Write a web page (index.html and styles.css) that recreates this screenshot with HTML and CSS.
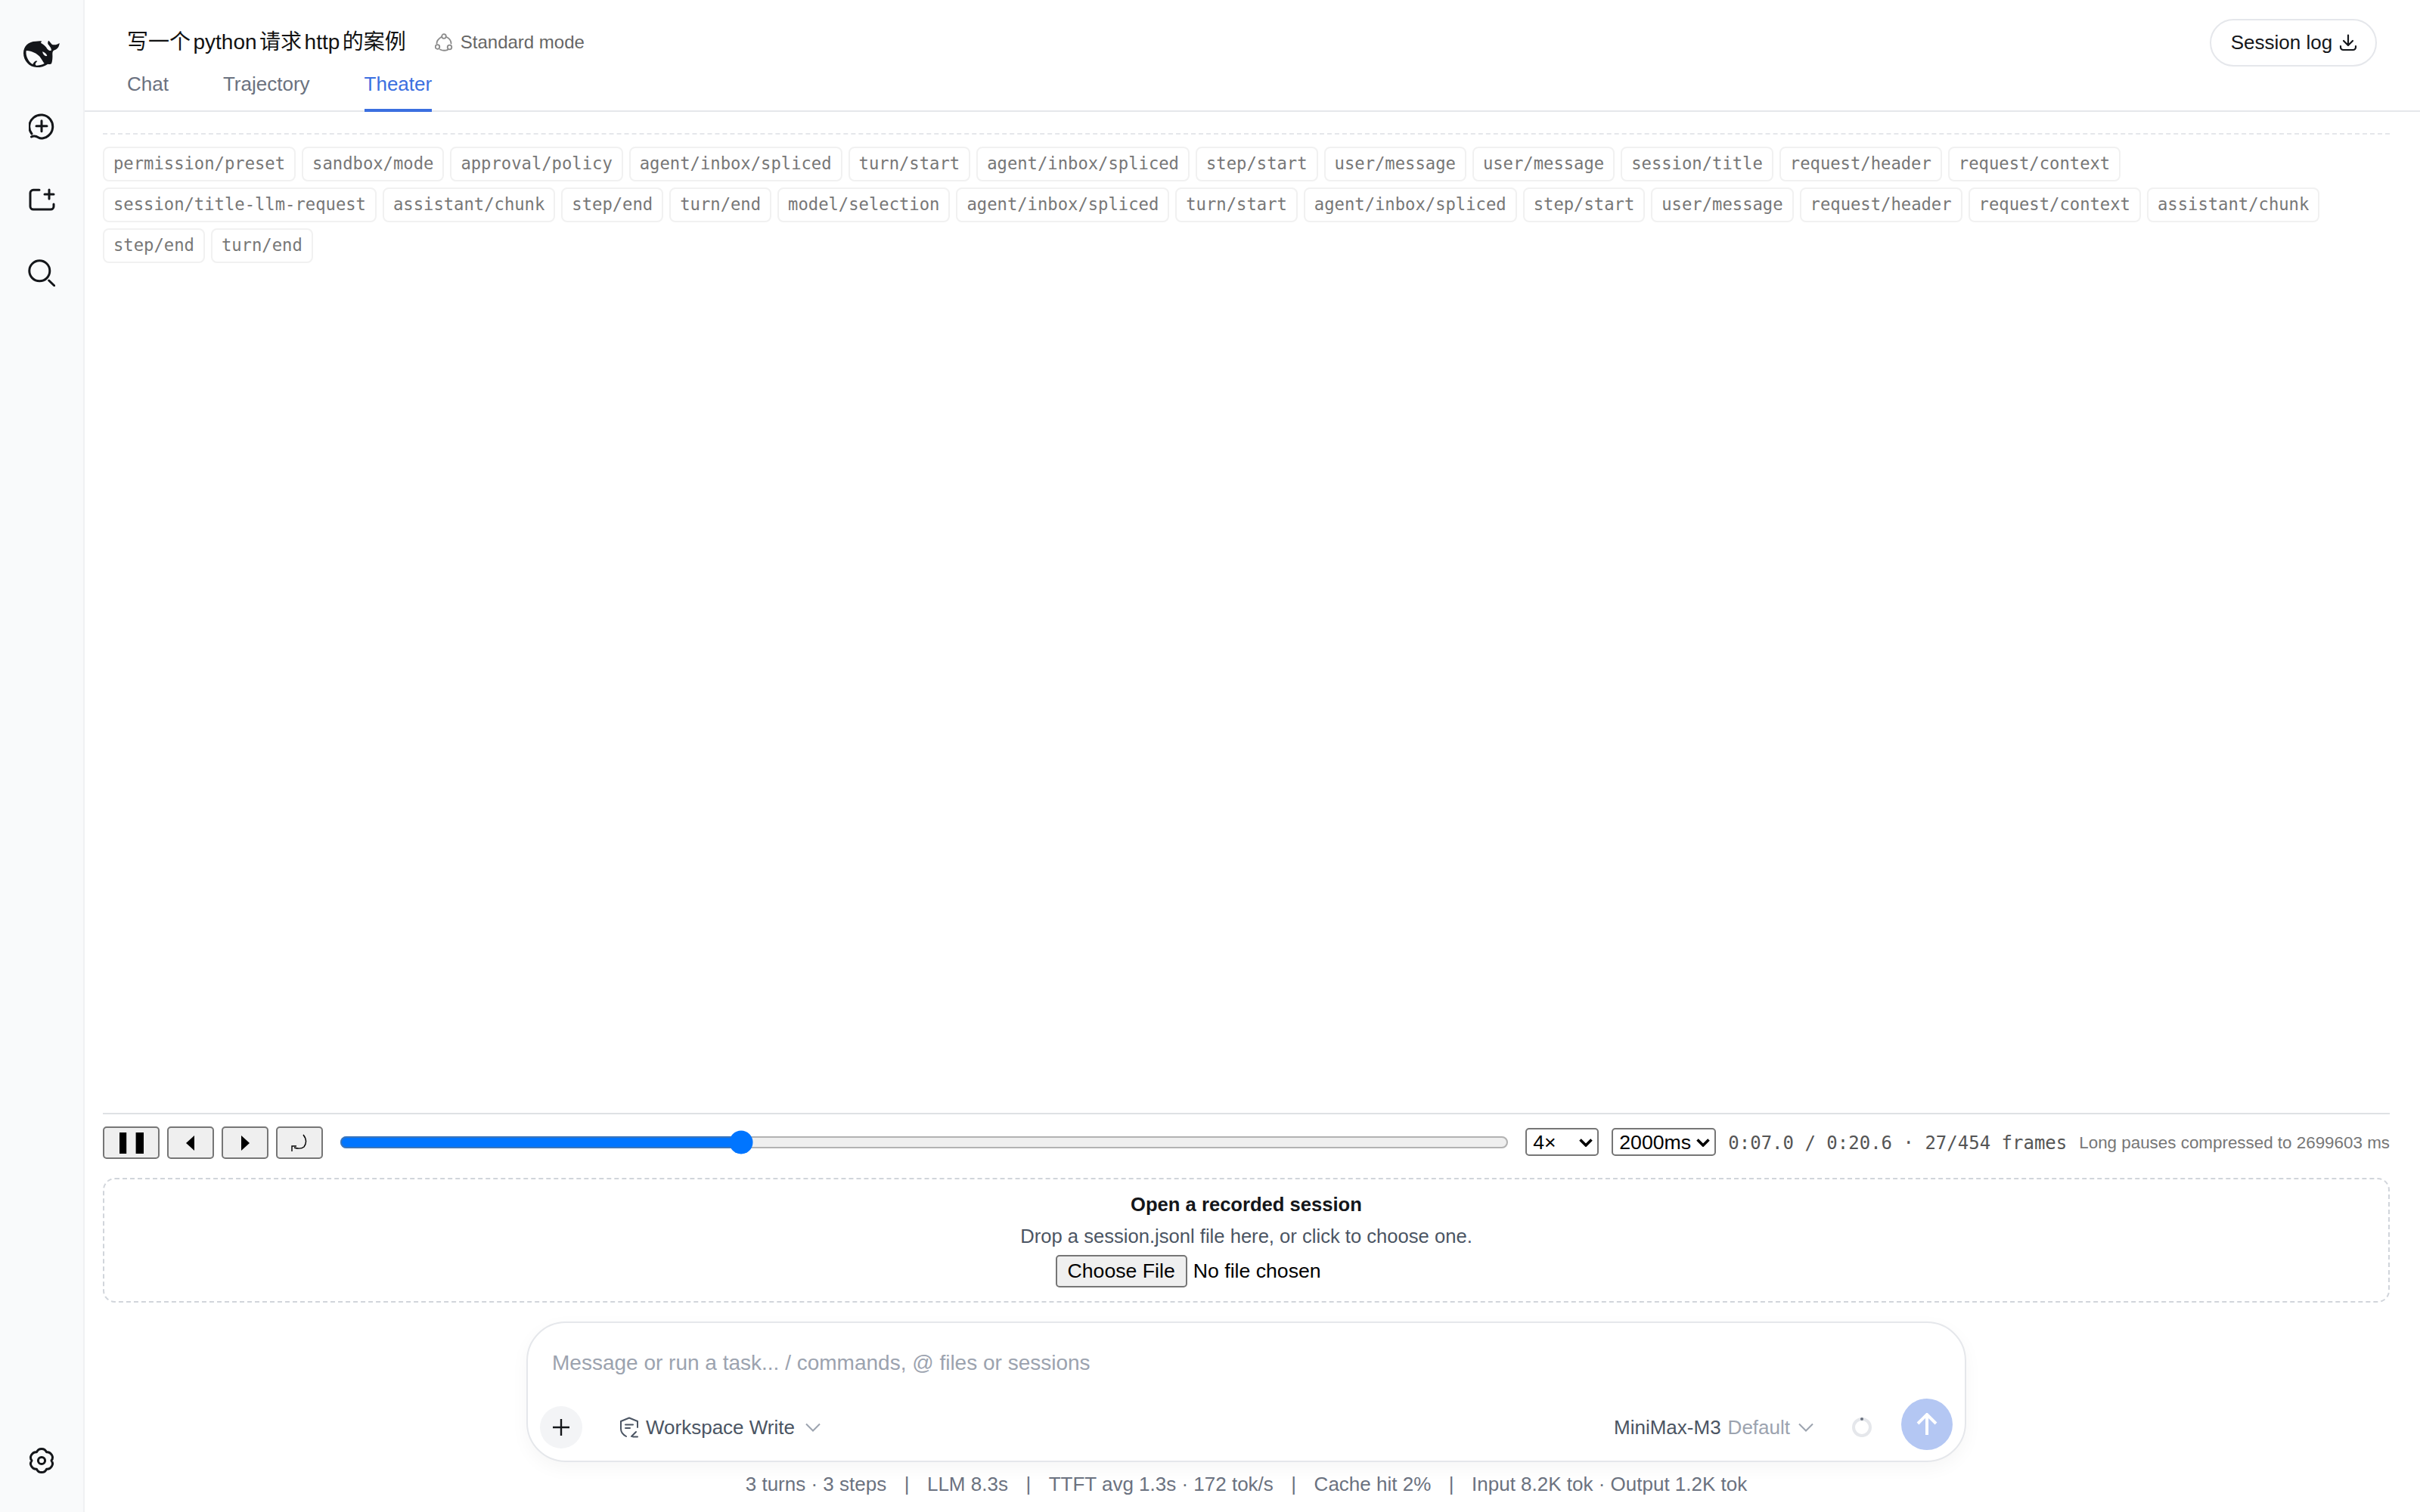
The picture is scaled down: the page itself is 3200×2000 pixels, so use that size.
FILE: index.html
```html
<!DOCTYPE html>
<html lang="en">
<head>
<meta charset="utf-8">
<title>Theater</title>
<link rel="stylesheet" href="styles.css">
</head>
<body>
<div class="app">
  <aside class="sidebar">
    <button class="side-btn logo" aria-label="Home">
      <svg width="48" height="36" viewBox="97 100 144 108"><path fill="#14161a" d="M97 152C97 124 118 105 145 105C153 105 162 103 170 105C166 108 165 110 168 113C178 118 186 126 192 136C197 141 203 144 207 141C210 134 200 124 194 115C193 110 194 105 197 102C201 106 205 111 211 118C219 120 230 120 240 112C239 126 232 136 220 140C214 142 212 147 212 155C213 168 212 184 208 194C204 197 198 196 194 195C180 205 165 208 150 208C120 208 97 182 97 152Z"/><path fill="#f9fafb" d="M108 142C124 140 150 152 162 166C168 174 174 186 180 193C170 199 158 201 148 201C140 196 146 190 152 184C146 180 140 184 134 196C120 190 104 165 108 142Z"/><path fill="#f9fafb" d="M172 146C180 148 188 154 191 162C186 166 176 162 172 146Z"/></svg>
    </button>
    <button class="side-btn" aria-label="New chat">
      <svg width="34" height="36" viewBox="0 0 34 36" fill="none" stroke="#14161a" stroke-width="3" stroke-linecap="round"><path d="M4 27A15.5 15.5 0 1 1 26 29.5C22 33 16 34 13 32C10 30 7 29 3.5 31"/><path d="M17 9.700v14M10 16.700h14"/></svg>
    </button>
    <button class="side-btn" aria-label="New folder">
      <svg width="36" height="30" viewBox="0 0 36 30" fill="none" stroke="#14161a" stroke-width="3" stroke-linecap="round"><path d="M15 2.300H7a4 4 0 0 0-4 4V24a4 4 0 0 0 4 4h23a4 4 0 0 0 4-4v-3"/><path d="M28 2v12M22 8h12"/></svg>
    </button>
    <button class="side-btn" aria-label="Search">
      <svg width="36" height="36" viewBox="0 0 36 36" fill="none" stroke="#14161a" stroke-width="3" stroke-linecap="round"><circle cx="15.300" cy="15.300" r="13.500"/><path d="M27.700 28L35 35"/></svg>
    </button>
    <button class="side-btn settings" aria-label="Settings">
      <svg width="36" height="36" viewBox="0 0 36 36" fill="none" stroke="#14161a" stroke-width="3" stroke-linejoin="round"><path d="M11.500 6.700C14 1 22 1 24.500 6.700C30 6 35 13 31 18C35 23 30 30 24.500 29.300C22 35 14 35 11.500 29.300C6 30 1 23 5 18C1 13 6 6 11.500 6.700Z"/><circle cx="18" cy="18" r="4.600"/></svg>
    </button>
  </aside>

  <main class="main">
    <header class="header">
      <div class="header-top">
        <div class="title-group">
          <h1 class="title">写一个python请求http的案例</h1>
          <span class="mode">
            <svg width="24" height="24" viewBox="0 0 24 24" fill="none" stroke="#8a8a8a" stroke-width="1.800" stroke-linecap="round"><circle cx="12" cy="4" r="2.800"/><circle cx="3.500" cy="18" r="2.800"/><circle cx="19.500" cy="18.500" r="2.800"/><path d="M8.500 5C4.500 7.500 2.500 10.500 2.500 13.500M15.500 5C19.500 7 21.500 10 21.500 13.500M7 21.500C10 23 14 23 17 21.800"/></svg>
            Standard mode
          </span>
        </div>
        <button class="log-btn">Session log
          <svg width="24" height="24" viewBox="0 0 24 24" fill="none" stroke="#14161a" stroke-width="2.200" stroke-linecap="round" stroke-linejoin="round"><path d="M12 2.500v13M6 10l6 6 6-6M2 17v1.500a3.500 3.500 0 0 0 3.500 3.500h13a3.500 3.500 0 0 0 3.500-3.500V17"/></svg>
        </button>
      </div>
      <nav class="tabs">
        <a class="tab">Chat</a>
        <a class="tab">Trajectory</a>
        <a class="tab active">Theater</a>
      </nav>
    </header>

    <section class="content">
      <div class="events">
        <span class="tag">permission/preset</span><span class="tag">sandbox/mode</span><span class="tag">approval/policy</span><span class="tag">agent/inbox/spliced</span><span class="tag">turn/start</span><span class="tag">agent/inbox/spliced</span><span class="tag">step/start</span><span class="tag">user/message</span><span class="tag">user/message</span><span class="tag">session/title</span><span class="tag">request/header</span><span class="tag">request/context</span><span class="tag">session/title-llm-request</span><span class="tag">assistant/chunk</span><span class="tag">step/end</span><span class="tag">turn/end</span><span class="tag">model/selection</span><span class="tag">agent/inbox/spliced</span><span class="tag">turn/start</span><span class="tag">agent/inbox/spliced</span><span class="tag">step/start</span><span class="tag">user/message</span><span class="tag">request/header</span><span class="tag">request/context</span><span class="tag">assistant/chunk</span><span class="tag">step/end</span><span class="tag">turn/end</span>
      </div>

      <div class="player">
        <div class="transport">
          <button class="ctl ctl-wide" aria-label="Pause"><svg width="16" height="14" viewBox="0 0 16 14"><path d="M0 0h4.600v14H0zM10.800 0H16v14h-5.200z"/></svg></button>
          <button class="ctl" aria-label="Previous"><svg width="7" height="10" viewBox="0 0 7 10"><path d="M6 0v10L.5 5z"/></svg></button>
          <button class="ctl" aria-label="Next"><svg width="7" height="10" viewBox="0 0 7 10"><path d="M1 0v10l5.500-5z"/></svg></button>
          <button class="ctl" aria-label="Restart"><svg width="12" height="12" viewBox="0 0 12 12" fill="none" stroke="#000" stroke-width=".7"><path d="M8.500.5C10.500 3 10.800 6 9 8.500C7.500 9.800 5 9.800 2.500 9"/><path d="M1 11.500V8h3"/></svg></button>
        </div>
        <input class="seek" type="range" min="0" max="20.6" step="0.1" value="7" aria-label="Seek">
        <span class="pick-wrap pick-speed">
          <select class="pick" aria-label="Speed"><option>4×</option></select>
          <svg class="pick-arrow" width="18" height="11" viewBox="0 0 18 11" fill="none" stroke="#000" stroke-width="3.600"><path d="M1.500 1.500L9 9l7.500-7.500"/></svg>
        </span>
        <span class="pick-wrap pick-gap">
          <select class="pick" aria-label="Pause limit"><option>2000ms</option></select>
          <svg class="pick-arrow" width="18" height="11" viewBox="0 0 18 11" fill="none" stroke="#000" stroke-width="3.600"><path d="M1.500 1.500L9 9l7.500-7.500"/></svg>
        </span>
        <span class="clock">0:07.0 / 0:20.6 · 27/454 frames</span>
        <span class="note">Long pauses compressed to 2699603 ms</span>
      </div>

      <div class="dropzone">
        <div class="drop-title">Open a recorded session</div>
        <div class="drop-desc">Drop a session.jsonl file here, or click to choose one.</div>
        <input class="file" type="file" aria-label="Session file">
      </div>

      <div class="composer">
        <div class="placeholder">Message or run a task... / commands, @ files or sessions</div>
        <div class="composer-row">
          <div class="composer-left">
            <button class="add" aria-label="Add"><svg width="24" height="24" viewBox="0 0 24 24" stroke="#14161a" stroke-width="2.400"><path d="M12 1v22M1 12h22"/></svg></button>
            <span class="perm">
              <svg width="26" height="28" viewBox="0 0 26 28" fill="none" stroke="#4b5563" stroke-width="2" stroke-linecap="round" stroke-linejoin="round"><path d="M24 14V6L13 1.500 2 6v10c0 4 2.500 7.500 7 10"/><path d="M8 10.500h10M8 15h6M16 26l6-6M18 26.500h6"/></svg>
              <span>Workspace Write</span>
              <svg class="chev" width="20" height="12" viewBox="0 0 20 12" fill="none" stroke="#9ca3af" stroke-width="2"><path d="M1 1.500l9 9 9-9"/></svg>
            </span>
          </div>
          <div class="composer-right">
            <span class="model"><span>MiniMax-M3</span><span class="model-default">Default</span>
              <svg class="chev" width="20" height="12" viewBox="0 0 20 12" fill="none" stroke="#9ca3af" stroke-width="2"><path d="M1 1.500l9 9 9-9"/></svg>
            </span>
            <svg class="spin" width="26" height="26" viewBox="0 0 26 26" fill="none"><circle cx="13" cy="13" r="11" stroke="#e5e7eb" stroke-width="4"/><circle cx="13" cy="2" r="2" fill="#6b7280"/></svg>
          </div>
          <button class="send" aria-label="Send"><svg width="28" height="30" viewBox="0 0 28 30" fill="none" stroke="#fff" stroke-width="4"><path d="M14 29V2M2 14L14 2l12 12"/></svg></button>
        </div>
      </div>

      <div class="stats">
        <span>3 turns · 3 steps</span><span>|</span><span>LLM 8.3s</span><span>|</span><span>TTFT avg 1.3s · 172 tok/s</span><span>|</span><span>Cache hit 2%</span><span>|</span><span>Input 8.2K tok · Output 1.2K tok</span>
      </div>
    </section>
  </main>
</div>
</body>
</html>
```
FILE: styles.css
```css
* { box-sizing: border-box; }
html, body { margin: 0; height: 100%; }
body {
  font-family: "Liberation Sans", "Noto Sans CJK SC", sans-serif;
  color: #14161a;
  background: #fff;
}
button { font-family: inherit; }
.app { display: flex; height: 2000px; width: 3200px; }

.sidebar {
  width: 112px;
  flex: none;
  background: #f9fafb;
  border-right: 2px solid #f0f1f3;
  display: flex;
  flex-direction: column;
  align-items: center;
  gap: 48.5px;
  padding: 47px 0 44px;
}
.side-btn {
  width: 48px;
  height: 48px;
  padding: 0;
  border: 0;
  background: none;
  display: flex;
  align-items: center;
  justify-content: center;
}
.settings { margin-top: auto; }

.main { flex: 1; min-width: 0; display: flex; flex-direction: column; }

.header { height: 148px; padding-top: 24px; border-bottom: 2px solid #e5e7eb; flex: none; }
.header-top {
  height: 64px;
  display: flex;
  align-items: center;
  justify-content: space-between;
  padding: 0 57px 0 56px;
}
.title-group { display: flex; align-items: center; gap: 38px; }
.title {
  margin: 0;
  font-size: 28px;
  line-height: 40px;
  font-weight: 400;
  color: #111;
  text-autospace: normal;
}
.mode { display: flex; align-items: center; gap: 10px; font-size: 24px; color: #666; }
.log-btn {
  height: 63px;
  width: 221px;
  padding: 0 0 0 2px;
  border: 2px solid #e5e7eb;
  border-radius: 32px;
  background: #fff;
  font-size: 26px;
  color: #14161a;
  display: flex;
  align-items: center;
  justify-content: center;
  gap: 9px;
}
.tabs { display: flex; gap: 72px; padding-left: 56px; }
.tab {
  height: 60px;
  padding-top: 4px;
  font-size: 26px;
  line-height: 39px;
  color: #6b7280;
  border-bottom: 4px solid transparent;
}
.tab.active { color: #3b6fe0; border-bottom-color: #3b6fe0; }

.content {
  flex: 1;
  min-height: 0;
  display: flex;
  flex-direction: column;
  padding: 28px 40px 20px 24px;
}
.events {
  flex: 1;
  min-height: 0;
  border-top: 2px dashed #e5e7eb;
  padding-top: 16px;
  display: flex;
  flex-wrap: wrap;
  align-content: flex-start;
  gap: 8px;
}
.tag {
  height: 46px;
  padding: 0 12px;
  border: 2px solid #f1f1f1;
  border-radius: 8px;
  font: 22.2px/41px "DejaVu Sans Mono", monospace;
  color: #777;
}

.player {
  flex: none;
  height: 86px;
  border-top: 2px solid #dfe1e4;
  padding-top: 16px;
  display: flex;
  align-items: flex-start;
}
.transport { display: flex; gap: 4.75px; zoom: 2; flex: none; }
.ctl {
  width: 31.25px;
  height: 21.5px;
  padding: 0;
  display: flex;
  align-items: center;
  justify-content: center;
}
.ctl-wide { width: 37.5px; }
.seek { zoom: 2; flex: 1; min-width: 0; margin: 2.5px 11px 0 11px; height: 16px; }
.pick-wrap { position: relative; flex: none; display: block; height: 37px; margin-top: 2px; }
.pick-speed { width: 97px; margin-right: 17px; }
.pick-gap { width: 138px; margin-right: 16px; }
.pick {
  zoom: 2;
  appearance: none;
  width: 100%;
  height: 18.5px;
  padding: 0 0 0 4px;
  border: 1px solid #767676;
  border-radius: 2.5px;
  background: #fff;
  color: #000;
  font: 13.333px "Liberation Sans", sans-serif;
  display: block;
}
.pick-arrow { position: absolute; right: 8px; top: 14px; pointer-events: none; }
.clock { font: 24px/44px "DejaVu Sans Mono", monospace; color: #555; white-space: nowrap; margin-right: 16px; }
.note { font-size: 22.4px; line-height: 44px; color: #777; white-space: nowrap; }

.dropzone {
  flex: none;
  height: 165px;
  border: 2px dashed #d1d5db;
  border-radius: 16px;
  padding-top: 16px;
  display: flex;
  flex-direction: column;
  align-items: center;
  gap: 8px;
}
.drop-title { font-size: 25.6px; line-height: 34px; font-weight: 700; color: #14161a; }
.drop-desc { font-size: 25.6px; line-height: 34px; color: #4b5563; }
.file { zoom: 2; font: 13.333px "Liberation Sans", sans-serif; color: #000; }

.composer {
  flex: none;
  width: 1904px;
  height: 186px;
  margin: 25px auto 0;
  border: 2px solid #e5e7eb;
  border-radius: 52px;
  box-shadow: 0 8px 24px rgba(0, 0, 0, .04);
  background: #fff;
  padding: 0 16px 14px 16px;
  display: flex;
  flex-direction: column;
  justify-content: space-between;
}
.placeholder { font-size: 28px; line-height: 42px; color: #9ca3af; padding: 32px 0 0 16px; }
.composer-row { display: flex; align-items: flex-start; height: 68px; }
.composer-left, .composer-right { height: 56px; margin-top: 10px; display: flex; align-items: center; }
.composer-left { flex: 1; gap: 49px; }
.composer-right { gap: 51px; margin-right: 39px; }
.add {
  width: 56px;
  height: 56px;
  padding: 0;
  border: 0;
  border-radius: 50%;
  background: #f3f4f6;
  display: flex;
  align-items: center;
  justify-content: center;
}
.perm, .model { display: flex; align-items: center; font-size: 26px; color: #4b5563; white-space: nowrap; }
.perm svg:first-child { margin-right: 9px; }
.chev { margin-left: 11px; }
.perm .chev { margin-left: 14px; }
.model-default { color: #9ca3af; margin-left: 9px; }
.spin { flex: none; }
.send {
  width: 68px;
  height: 68px;
  padding: 0;
  border: 0;
  border-radius: 50%;
  background: #b4c7f3;
  display: flex;
  align-items: center;
  justify-content: center;
  flex: none;
}

.stats {
  flex: none;
  display: flex;
  justify-content: center;
  gap: 23.5px;
  font-size: 26px;
  line-height: 34px;
  color: #6b7280;
  margin-top: 12px;
}
```
